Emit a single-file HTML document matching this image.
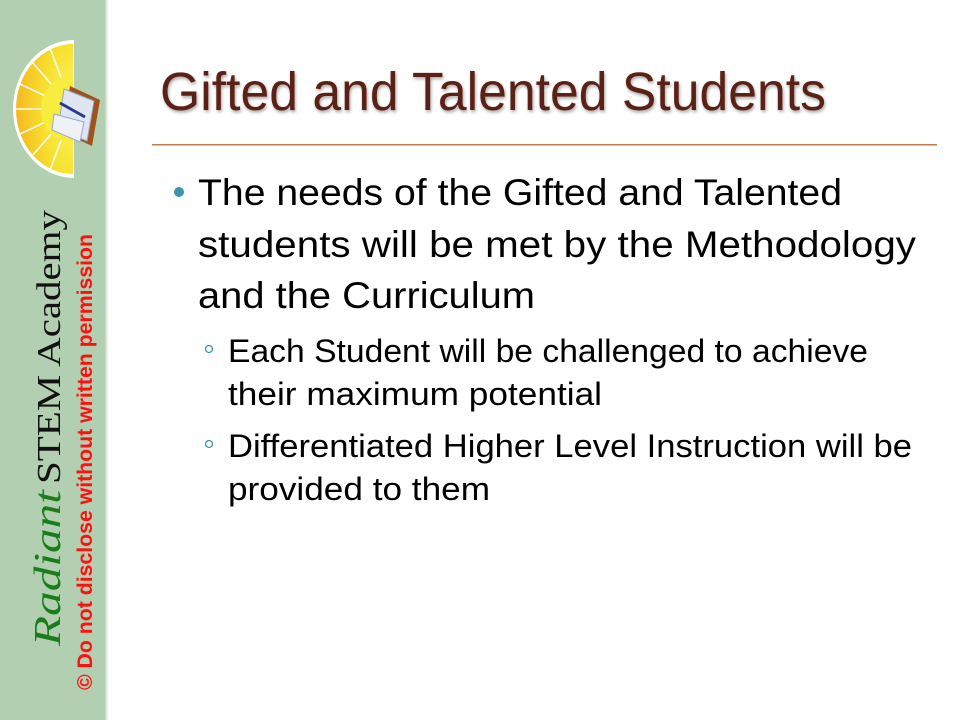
<!DOCTYPE html>
<html><head><meta charset="utf-8"><style>
html,body{margin:0;padding:0;background:#fff;}
svg{display:block}
</style></head><body>
<svg width="960" height="720" viewBox="0 0 960 720" xmlns="http://www.w3.org/2000/svg">
<defs>
<linearGradient id="sh" x1="0" x2="1"><stop offset="0" stop-color="#9aa99a"/><stop offset="1" stop-color="#fff" stop-opacity="0"/></linearGradient>
<radialGradient id="sun" cx="1" cy="0.5" r="1"><stop offset="0" stop-color="#fff46a"/><stop offset="0.5" stop-color="#f7e230"/><stop offset="1" stop-color="#f5b820"/></radialGradient>
<filter id="ts" x="-5%" y="-20%" width="110%" height="150%"><feGaussianBlur in="SourceAlpha" stdDeviation="1.5"/><feOffset dx="1" dy="2"/><feComponentTransfer><feFuncA type="linear" slope="0.35"/></feComponentTransfer><feMerge><feMergeNode/><feMergeNode in="SourceGraphic"/></feMerge></filter>
</defs>
<rect x="0" y="0" width="105" height="720" fill="#b2cfb1"/>
<rect x="105" y="0" width="5" height="720" fill="url(#sh)" opacity="0.6"/>
<!-- sun logo -->
<g>
<path d="M74 40 A61 69 0 0 0 74 178 Z" fill="#fff"/>
<path d="M73 44 A57 65 0 0 0 73 174 Z" fill="url(#sun)"/>
<g stroke="#fff" stroke-width="1.6" opacity="0.9">
<line x1="73" y1="109" x2="16" y2="109"/><line x1="73" y1="109" x2="20" y2="84"/><line x1="73" y1="109" x2="20" y2="134"/>
<line x1="73" y1="109" x2="32" y2="62"/><line x1="73" y1="109" x2="32" y2="156"/><line x1="73" y1="109" x2="50" y2="48"/><line x1="73" y1="109" x2="50" y2="170"/>
</g>
<path d="M73 75 A32 34 0 0 0 73 143 Z" fill="#f8ec40"/>
<path d="M70 86 L100 100 L92 146 L62 132 Z" fill="#a0521e"/>
<path d="M64 89 L94 101 L87 141 L58 129 Z" fill="#dde6f2" stroke="#9aa8c0" stroke-width="1"/>
<path d="M54 114 L84 122 L80 142 L52 130 Z" fill="#eef2f8" stroke="#9aa8c0" stroke-width="1"/>
<line x1="60" y1="103" x2="85" y2="117" stroke="#2a3a8a" stroke-width="3"/>
</g>
<!-- vertical text -->
<text transform="translate(60,646) rotate(-90)" font-family="Liberation Serif, serif" font-style="italic" font-size="38" fill="#1a7d1a" textLength="156" lengthAdjust="spacingAndGlyphs">Radiant</text>
<text transform="translate(60,484) rotate(-90)" font-family="Liberation Serif, serif" font-size="34" fill="#111" textLength="274" lengthAdjust="spacingAndGlyphs">STEM Academy</text>
<text transform="translate(92,690) rotate(-90)" font-family="Liberation Sans, sans-serif" font-weight="bold" font-size="21" fill="#ff1010" textLength="456" lengthAdjust="spacingAndGlyphs">© Do not disclose without written permission</text>
<!-- title -->
<text x="160" y="110" font-family="Liberation Sans, sans-serif" font-size="54" fill="#5a2218" filter="url(#ts)" textLength="666" lengthAdjust="spacingAndGlyphs">Gifted and Talented Students</text>
<rect x="152" y="144" width="785" height="1.5" fill="#c07a4a"/>
<!-- bullets -->
<circle cx="179" cy="192" r="5" fill="#3a95aa"/>
<g font-family="Liberation Sans, sans-serif" fill="#000">
<text x="198" y="205" font-size="37" textLength="644" lengthAdjust="spacingAndGlyphs">The needs of the Gifted and Talented</text>
<text x="198" y="257" font-size="37" textLength="718" lengthAdjust="spacingAndGlyphs">students will be met by the Methodology</text>
<text x="198" y="308" font-size="37" textLength="337" lengthAdjust="spacingAndGlyphs">and the Curriculum</text>
<text x="228" y="362" font-size="32" textLength="640" lengthAdjust="spacingAndGlyphs">Each Student will be challenged to achieve</text>
<text x="228" y="405" font-size="32" textLength="374" lengthAdjust="spacingAndGlyphs">their maximum potential</text>
<text x="228" y="457" font-size="32" textLength="684" lengthAdjust="spacingAndGlyphs">Differentiated Higher Level Instruction will be</text>
<text x="228" y="500" font-size="32" textLength="262" lengthAdjust="spacingAndGlyphs">provided to them</text>
</g>
<circle cx="209" cy="349" r="3.5" fill="none" stroke="#3a95aa" stroke-width="1.3"/>
<circle cx="209" cy="444" r="3.5" fill="none" stroke="#3a95aa" stroke-width="1.3"/>
</svg>
</body></html>
